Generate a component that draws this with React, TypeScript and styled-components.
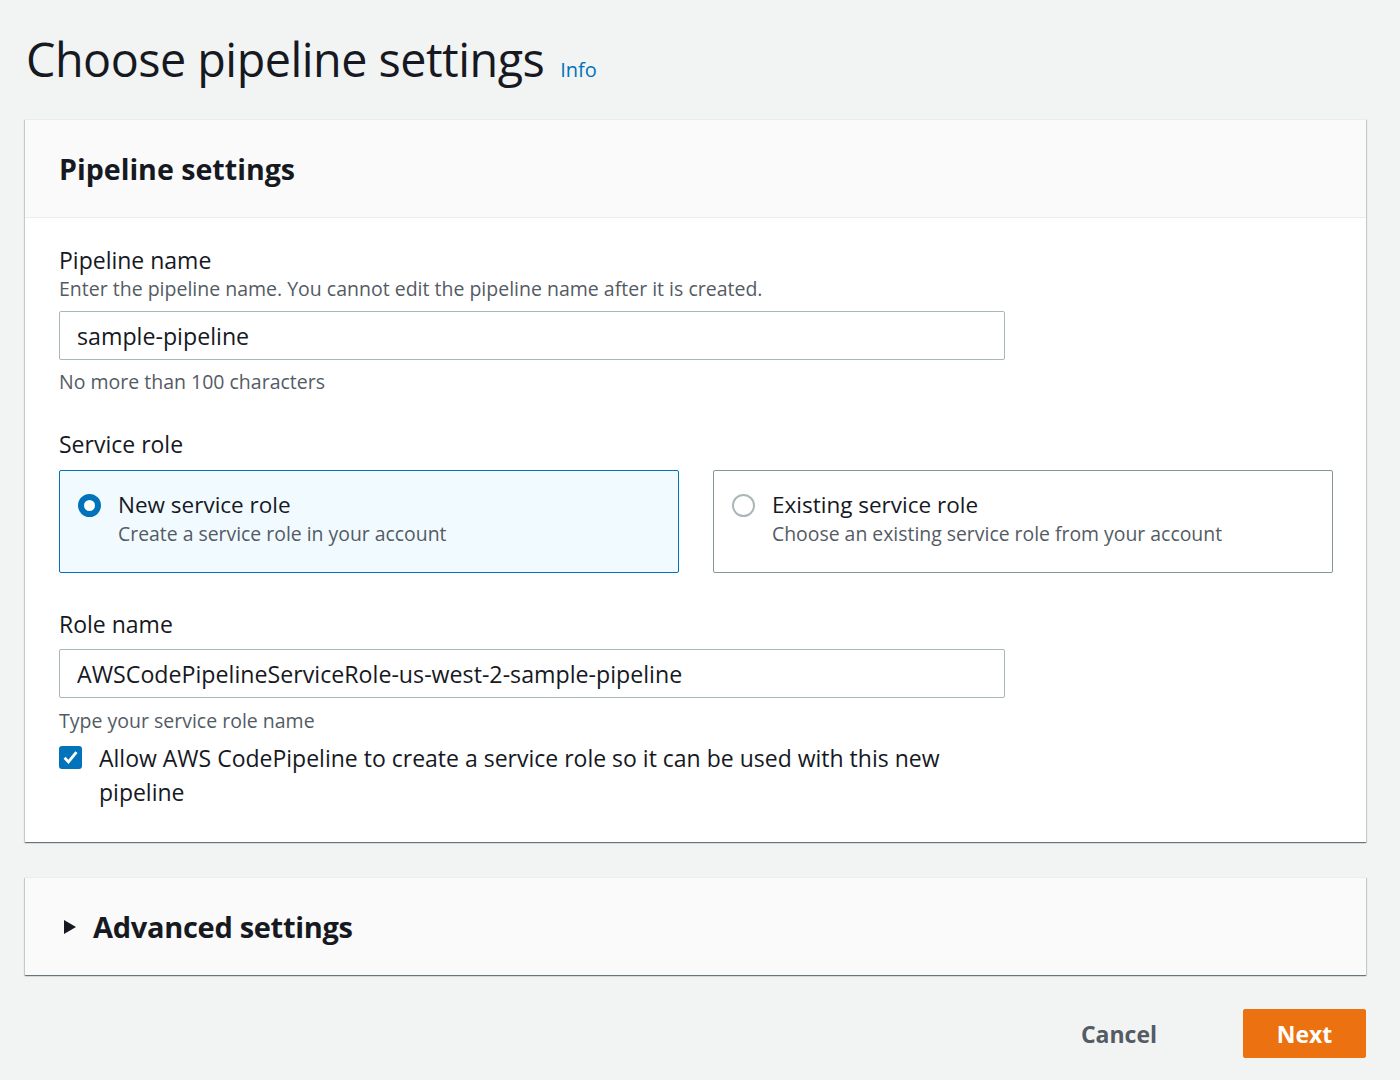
import React from "react";
import styled, { createGlobalStyle } from "styled-components";

const GlobalStyle = createGlobalStyle`
  body {
    margin: 0;
    background: #f2f3f3;
    font-family: "Open Sans", "Noto Sans", sans-serif;
    color: #16191f;
  }
`;

const Page = styled.div`
  padding: 24px 34px 21px 25px;
`;

const TitleRow = styled.div`
  display: flex;
  align-items: baseline;
  gap: 16px;
  padding-left: 1px;
  height: 72px;
`;

const Title = styled.h1`
  margin: 0;
  font-size: 46.7px;
  font-weight: 400;
  line-height: 70px;
  letter-spacing: -0.5px;
  color: #16191f;
`;

const InfoLink = styled.a`
  font-size: 20px;
  color: #0073bb;
  text-decoration: none;
`;

const Card = styled.section<{ $muted?: boolean }>`
  background: ${(p) => (p.$muted ? "#fafafa" : "#fff")};
  box-shadow: 0 1px 1px 0 rgba(0, 28, 36, 0.45), 1px 1px 1px 0 rgba(0, 28, 36, 0.12),
    -1px 1px 1px 0 rgba(0, 28, 36, 0.12);
  border-top: 1px solid #eaeded;
  margin-top: ${(p) => (p.$muted ? "35px" : "23px")};
`;

const CardHeader = styled.div`
  height: 97px;
  display: flex;
  align-items: center;
  padding: 0 34px;
  background: #fafafa;
  border-bottom: 1px solid #eaeded;
`;

const CardTitle = styled.h2`
  margin: 0;
  font-size: 28.6px;
  font-weight: 700;
`;

const CardBody = styled.div`
  padding: 27px 34px 33px;
`;

const Field = styled.div<{ $gap?: number }>`
  margin-top: ${(p) => p.$gap ?? 0}px;
`;

const Label = styled.div`
  font-size: 23px;
  line-height: 30px;
  color: #16191f;
`;

const Description = styled.div`
  font-size: 19.5px;
  line-height: 28px;
  color: #545b64;
`;

const Input = styled.input`
  display: block;
  box-sizing: border-box;
  width: 946px;
  height: 49px;
  padding: 0 17px;
  border: 1px solid #aab7b8;
  border-radius: 2px;
  font-family: inherit;
  font-size: 23.2px;
  color: #16191f;
  background: #fff;
  outline: none;
  margin-top: ${(p) => (p.id === "role" ? 10 : 8)}px;
`;

const Hint = styled(Description)<{ $gap: number }>`
  margin-top: ${(p) => p.$gap}px;
`;

const Tiles = styled.div`
  display: grid;
  grid-template-columns: 620px 620px;
  gap: 34px;
  margin-top: 11px;
`;

const Tile = styled.label<{ $selected?: boolean }>`
  box-sizing: border-box;
  height: 103px;
  display: flex;
  gap: 17px;
  padding: 19px 18px 0;
  border: 1px solid ${(p) => (p.$selected ? "#0073bb" : "#879596")};
  background: ${(p) => (p.$selected ? "#f1faff" : "#fff")};
  border-radius: 2px;
`;

const Radio = styled.span<{ $checked?: boolean }>`
  box-sizing: border-box;
  flex: none;
  width: 23px;
  height: 23px;
  margin-top: 4px;
  border-radius: 50%;
  border: ${(p) => (p.$checked ? "6px solid #0073bb" : "2px solid #aab7b8")};
  background: #fff;
`;

const TileText = styled.div`
  display: flex;
  flex-direction: column;
`;

const TileTitle = styled(Label)`
  font-size: 22.5px;
`;

const TileDescription = styled(Description)`
  font-size: 19.4px;
`;

const CheckRow = styled.label`
  display: flex;
  gap: 17px;
  width: 946px;
  margin-top: 6px;
`;

const CheckBox = styled.span`
  flex: none;
  width: 23px;
  height: 23px;
  margin-top: 5px;
  border-radius: 3px;
  background: #0073bb;
  display: flex;
  align-items: center;
  justify-content: center;
`;

const CheckText = styled.span`
  font-size: 23px;
  line-height: 34px;
  color: #16191f;
`;

const Expander = styled.div`
  height: 97px;
  display: flex;
  align-items: center;
  gap: 16px;
  padding: 0 38px;
`;

const ExpanderTitle = styled.h2`
  margin: 0;
  font-size: 29px;
  font-weight: 700;
  letter-spacing: -0.3px;
`;

const Actions = styled.div`
  display: flex;
  justify-content: flex-end;
  align-items: center;
  gap: 66px;
  margin-top: 34px;
`;

const TextButton = styled.button`
  border: none;
  background: none;
  padding: 0 20px;
  height: 49px;
  font-family: inherit;
  font-size: 23px;
  font-weight: 700;
  color: #545b64;
`;

const PrimaryButton = styled.button`
  width: 123px;
  height: 49px;
  border: 1px solid #ec7211;
  border-radius: 2px;
  background: #ec7211;
  color: #fff;
  font-family: inherit;
  font-size: 23px;
  font-weight: 700;
`;

export default function App() {
  return (
    <>
      <GlobalStyle />
      <Page>
        <TitleRow>
          <Title>Choose pipeline settings</Title>
          <InfoLink href="#">Info</InfoLink>
        </TitleRow>

        <Card>
          <CardHeader>
            <CardTitle>Pipeline settings</CardTitle>
          </CardHeader>
          <CardBody>
            <Field>
              <Label>Pipeline name</Label>
              <Description>
                Enter the pipeline name. You cannot edit the pipeline name after it is created.
              </Description>
              <Input id="name" defaultValue="sample-pipeline" />
              <Hint $gap={8}>No more than 100 characters</Hint>
            </Field>

            <Field $gap={33}>
              <Label>Service role</Label>
              <Tiles>
                <Tile $selected>
                  <Radio $checked />
                  <TileText>
                    <TileTitle>New service role</TileTitle>
                    <TileDescription>Create a service role in your account</TileDescription>
                  </TileText>
                </Tile>
                <Tile>
                  <Radio />
                  <TileText>
                    <TileTitle>Existing service role</TileTitle>
                    <TileDescription>
                      Choose an existing service role from your account
                    </TileDescription>
                  </TileText>
                </Tile>
              </Tiles>
            </Field>

            <Field $gap={36}>
              <Label>Role name</Label>
              <Input id="role" defaultValue="AWSCodePipelineServiceRole-us-west-2-sample-pipeline" />
              <Hint $gap={9}>Type your service role name</Hint>
              <CheckRow>
                <CheckBox>
                  <svg width="19" height="19" viewBox="0 0 16 16">
                    <path d="M3 8.3l3.3 3.4L13 3.5" fill="none" stroke="#fff" strokeWidth="2.4" />
                  </svg>
                </CheckBox>
                <CheckText>
                  Allow AWS CodePipeline to create a service role so it can be used with this new
                  pipeline
                </CheckText>
              </CheckRow>
            </Field>
          </CardBody>
        </Card>

        <Card $muted>
          <Expander>
            <svg width="14" height="16" viewBox="0 0 14 16">
              <path d="M1 1l12 7-12 7z" fill="#16191f" />
            </svg>
            <ExpanderTitle>Advanced settings</ExpanderTitle>
          </Expander>
        </Card>

        <Actions>
          <TextButton>Cancel</TextButton>
          <PrimaryButton>Next</PrimaryButton>
        </Actions>
      </Page>
    </>
  );
}
